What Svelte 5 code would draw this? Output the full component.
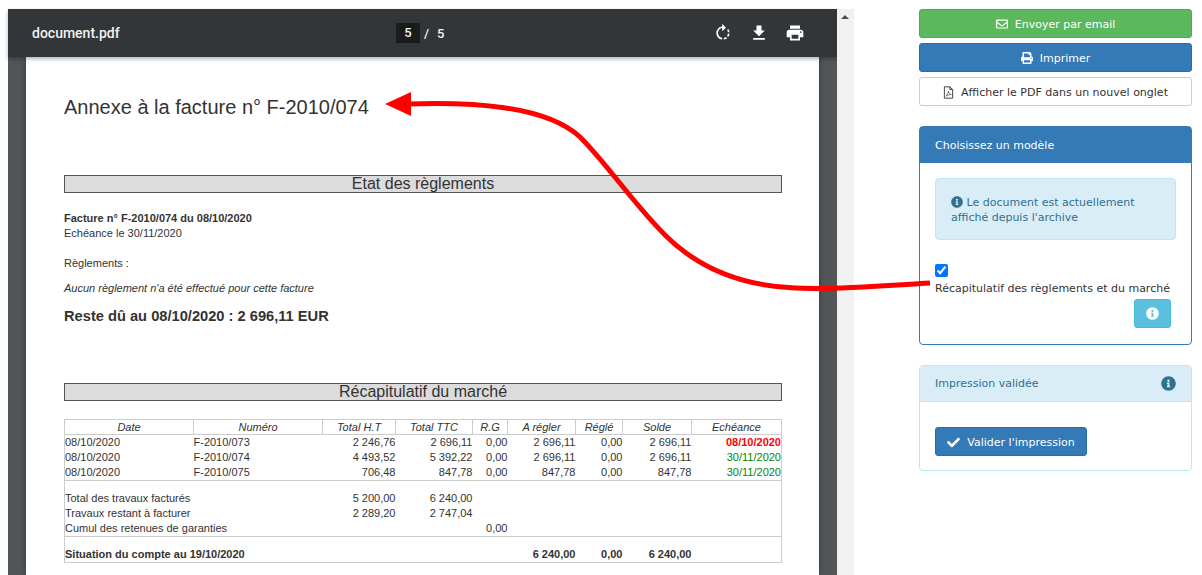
<script>
  const icons = {
    check: 'M173.898 439.404l-166.4-166.4c-9.997-9.997-9.997-26.206 0-36.204l36.203-36.204c9.997-9.998 26.207-9.998 36.204 0L192 312.69 432.095 72.596c9.997-9.997 26.207-9.997 36.204 0l36.203 36.204c9.997 9.997 9.997 26.206 0 36.204l-294.4 294.401c-9.998 9.997-26.207 9.997-36.204-.001z',
    info: 'M256 8C119.043 8 8 119.083 8 256c0 136.997 111.043 248 248 248s248-111.003 248-248C504 119.083 392.957 8 256 8zm0 110c23.196 0 42 18.804 42 42s-18.804 42-42 42-42-18.804-42-42 18.804-42 42-42zm56 254c0 6.627-5.373 12-12 12h-88c-6.627 0-12-5.373-12-12v-24c0-6.627 5.373-12 12-12h12v-64h-12c-6.627 0-12-5.373-12-12v-24c0-6.627 5.373-12 12-12h64c6.627 0 12 5.373 12 12v100h12c6.627 0 12 5.373 12 12v24z',
    print: 'M448 192V77.25c0-8.49-3.37-16.62-9.37-22.63L393.37 9.37c-6-6-14.14-9.37-22.63-9.37H96C78.33 0 64 14.33 64 32v160c-35.35 0-64 28.65-64 64v112c0 8.84 7.16 16 16 16h48v96c0 17.67 14.33 32 32 32h320c17.67 0 32-14.33 32-32v-96h48c8.84 0 16-7.16 16-16V256c0-35.35-28.65-64-64-64zm-64 256H128v-96h256v96zm0-224H128V64h192v48c0 8.84 7.16 16 16 16h48v96zm48 72c-13.25 0-24-10.75-24-24 0-13.26 10.75-24 24-24s24 10.74 24 24c0 13.25-10.75 24-24 24z',
    mail: 'M464 64H48C21.49 64 0 85.49 0 112v288c0 26.51 21.49 48 48 48h416c26.51 0 48-21.49 48-48V112c0-26.51-21.49-48-48-48zm0 48v40.805c-22.422 18.259-58.168 46.651-134.587 106.49-16.841 13.247-50.201 45.072-73.413 44.701-23.208.375-56.579-31.459-73.413-44.701C106.18 199.465 70.425 171.067 48 152.805V112h416zM48 400V214.398c22.914 18.251 55.409 43.862 104.938 82.646 21.857 17.205 60.134 55.186 103.062 54.955 42.717.231 80.509-37.199 103.053-54.947 49.528-38.783 82.032-64.401 104.947-82.653V400H48z'
  };

  const columns = [129, 129, 73, 77, 35, 68, 47, 69, 90];
  const heads = ['Date', 'Numéro', 'Total H.T', 'Total TTC', 'R.G', 'A régler', 'Réglé', 'Solde', 'Echéance'];
  const invoices = [
    ['08/10/2020', 'F-2010/073', '2 246,76', '2 696,11', '0,00', '2 696,11', '0,00', '2 696,11', '08/10/2020', 'late'],
    ['08/10/2020', 'F-2010/074', '4 493,52', '5 392,22', '0,00', '2 696,11', '0,00', '2 696,11', '30/11/2020', 'ok'],
    ['08/10/2020', 'F-2010/075', '706,48', '847,78', '0,00', '847,78', '0,00', '847,78', '30/11/2020', 'ok']
  ];
  const totals = [
    ['Total des travaux facturés', '5 200,00', '6 240,00', ''],
    ['Travaux restant à facturer', '2 289,20', '2 747,04', ''],
    ['Cumul des retenues de garanties', '', '', '0,00']
  ];
</script>

{#snippet fa(name, size)}
  <svg class="fa" viewBox="0 0 512 512" width={size} height={size} fill="currentColor"><path d={icons[name]} /></svg>
{/snippet}

<div class="screen">
  <section class="viewer">
    <header class="toolbar">
      <span class="title">document.pdf</span>
      <div class="pager"><span class="current">5</span><span class="sep">/</span><span>5</span></div>
      <div class="tools">
        <svg viewBox="0 0 24 24" width="20" height="20" fill="currentColor"><path d="M15.55 5.55L11 1v3.07C7.06 4.56 4 7.92 4 12s3.05 7.44 7 7.93v-2.02c-2.84-.48-5-2.94-5-5.91s2.16-5.43 5-5.91V10l4.55-4.45zM19.93 11c-.17-1.39-.72-2.73-1.62-3.89l-1.42 1.42c.54.75.88 1.6 1.02 2.47h2.02zM13 17.9v2.02c1.39-.17 2.74-.71 3.9-1.61l-1.44-1.44c-.75.54-1.59.89-2.46 1.03zm3.89-2.42l1.42 1.41c.9-1.16 1.45-2.5 1.62-3.89h-2.02c-.14.87-.48 1.72-1.02 2.48z" /></svg>
        <svg viewBox="0 0 24 24" width="20" height="20" fill="currentColor"><path d="M19 9h-4V3H9v6H5l7 7 7-7zM5 18v2h14v-2H5z" /></svg>
        <svg viewBox="0 0 24 24" width="20" height="20" fill="currentColor"><path d="M19 8H5c-1.66 0-3 1.34-3 3v6h4v4h12v-4h4v-6c0-1.66-1.34-3-3-3zm-3 11H8v-5h8v5zm3-7c-.55 0-1-.45-1-1s.45-1 1-1 1 .45 1 1-.45 1-1 1zm-1-9H6v4h12V3z" /></svg>
      </div>
    </header>
    <div class="stage">
      <article class="page">
        <h1>Annexe à la facture n° F-2010/074</h1>
        <h2 class="band first">Etat des règlements</h2>
        <p class="line bold">Facture n° F-2010/074 du 08/10/2020</p>
        <p class="line">Echéance le 30/11/2020</p>
        <p class="line gap-a">Règlements :</p>
        <p class="line gap-b"><em>Aucun règlement n'a été effectué pour cette facture</em></p>
        <p class="rest">Reste dû au 08/10/2020 : 2 696,11 EUR</p>
        <h2 class="band second">Récapitulatif du marché</h2>
        <table>
          <colgroup>
            {#each columns as w}<col style="width:{w}px" />{/each}
          </colgroup>
          <thead>
            <tr>{#each heads as h}<th>{h}</th>{/each}</tr>
          </thead>
          <tbody>
            {#each invoices as r}
              <tr>
                <td>{r[0]}</td><td>{r[1]}</td>
                {#each r.slice(2, 8) as v}<td class="num">{v}</td>{/each}
                <td class="num {r[9]}">{r[8]}</td>
              </tr>
            {/each}
            <tr class="rule"><td colspan="9"></td></tr>
            {#each totals as t}
              <tr>
                <td colspan="2">{t[0]}</td>
                <td class="num">{t[1]}</td><td class="num">{t[2]}</td><td class="num">{t[3]}</td>
                <td colspan="4"></td>
              </tr>
            {/each}
            <tr class="rule"><td colspan="9"></td></tr>
            <tr class="sum">
              <td colspan="2">Situation du compte au 19/10/2020</td>
              <td></td><td></td><td></td>
              <td class="num">6 240,00</td><td class="num">0,00</td><td class="num">6 240,00</td><td></td>
            </tr>
          </tbody>
        </table>
      </article>
    </div>
  </section>

  <div class="scrollbar"><span class="arrow-up"></span></div>

  <aside class="side">
    <button class="btn green">{@render fa('mail', 12)}Envoyer par email</button>
    <button class="btn blue">{@render fa('print', 12)}Imprimer</button>
    <button class="btn plain">
      <svg class="fa" viewBox="0 0 12 14" width="11" height="13" fill="none" stroke="#333" stroke-width="1"><path d="M1.5 .8h6l3 3v9.4h-9zM7.500 .8v3h3" /><path d="M3.2 11c1.5-1 2.6-3.6 2.6-5.5 1 2.4 1.8 3.6 3.2 3.8-2-.1-4 .5-5.800 1.700z" stroke-width=".7" /></svg>
      Afficher le PDF dans un nouvel onglet
    </button>

    <div class="panel primary">
      <div class="panel-head">Choisissez un modèle</div>
      <div class="panel-body">
        <div class="alert">{@render fa('info', 12)} Le document est actuellement affiché depuis l'archive</div>
        <label class="model">
          <input type="checkbox" checked />
          <span>Récapitulatif des règlements et du marché</span>
        </label>
        <div class="model-action">
          <button class="btn-info" aria-label="Informations">{@render fa('info', 13)}</button>
        </div>
      </div>
    </div>

    <div class="panel validated">
      <div class="panel-head">
        <span>Impression validée</span>
        {@render fa('info', 15)}
      </div>
      <div class="panel-body">
        <button class="btn blue validate">{@render fa('check', 13)}Valider l'impression</button>
      </div>
    </div>
  </aside>

  <!-- Annotation drawn over the screenshot -->
  <svg class="annotation" width="1202" height="575" viewBox="0 0 1202 575">
    <path d="M930 283 C880 286 835 290 795 288 C745 286 700 270 665 235 C632 202 608 165 580 137 C545 105 470 102 408 104" fill="none" stroke="#f00" stroke-width="5" />
    <polygon points="385,104 411,92 411,116" fill="#f00" />
  </svg>
</div>

<style>
  :global(body) {
    margin: 0;
    background: #fff;
    overflow: hidden;
  }

  .screen {
    position: relative;
    display: flex;
    align-items: flex-start;
    width: 1202px;
    height: 575px;
    overflow: hidden;
    font-family: "DejaVu Sans", Verdana, sans-serif;
    font-size: 11px;
    color: #333;
  }

  .viewer {
    width: 829px;
    height: 566px;
    margin: 9px 0 0 8px;
    flex: none;
    display: flex;
    flex-direction: column;
    background: #525659;
  }

  .toolbar {
    height: 48px;
    flex: none;
    display: grid;
    grid-template-columns: 364px auto 1fr;
    align-items: center;
    padding: 0 32px 0 24px;
    background: #323639;
    color: #f1f1f1;
    font-family: Roboto, sans-serif;
    box-shadow: 0 2px 4px rgba(0, 0, 0, .3);
    position: relative;
  }

  .title {
    font-size: 14px;
    font-weight: 500;
  }

  .pager {
    display: flex;
    align-items: center;
    font-size: 13px;
    font-weight: 500;
  }

  .current {
    width: 24px;
    height: 20px;
    line-height: 20px;
    text-align: center;
    background: #191b1c;
  }

  .sep {
    margin: 0 8px 0 4px;
  }

  .tools {
    display: flex;
    justify-content: flex-end;
    align-items: center;
    gap: 16px;
    color: #fff;
  }

  .stage {
    flex: 1;
    min-height: 0;
    padding: 0 18px;
    overflow: hidden;
  }

  .page {
    height: 100%;
    padding: 39px 37px 0 38px;
    box-sizing: border-box;
    background: #fff;
    box-shadow: 0 0 6px rgba(0, 0, 0, .35);
    font-family: "Liberation Sans", Arial, sans-serif;
    font-size: 11px;
    color: #333;
  }

  h1 {
    margin: 0;
    font-size: 20px;
    font-weight: 400;
    line-height: 23px;
  }

  .band {
    margin: 0;
    height: 16px;
    border: 1px solid #555;
    background: #dcdcdc;
    font-size: 16px;
    font-weight: 400;
    line-height: 16px;
    text-align: center;
  }

  .band.first {
    margin-top: 56px;
  }

  .band.second {
    margin-top: 59px;
  }

  .line {
    margin: 0;
    line-height: 15px;
  }

  .band.first + .line {
    margin-top: 18px;
  }

  .bold {
    font-weight: 700;
  }

  .gap-a {
    margin-top: 15px;
  }

  .gap-b {
    margin-top: 10px;
  }

  .rest {
    margin: 12px 0 0;
    font-size: 14.67px;
    font-weight: 700;
    line-height: 16px;
  }

  table {
    width: 718px;
    margin-top: 18px;
    table-layout: fixed;
    border-collapse: collapse;
    border: 1px solid #ccc;
    font-size: 11px;
  }

  th {
    height: 14px;
    padding: 0;
    font-weight: 400;
    font-style: italic;
    border-left: 1px solid #ccc;
    border-bottom: 1px solid #ccc;
    line-height: 14px;
  }

  td {
    height: 15px;
    padding: 0;
    line-height: 15px;
    white-space: nowrap;
  }

  .num {
    text-align: right;
  }

  .late {
    color: #f00;
    font-weight: 700;
  }

  .ok {
    color: #080;
  }

  .rule td {
    height: 10px;
    padding: 0;
    border-top: 1px solid #ccc;
  }

  .sum td {
    font-weight: 700;
  }

  .scrollbar {
    width: 17px;
    height: 566px;
    margin-top: 9px;
    flex: none;
    background: #f1f1f1;
    position: relative;
  }

  .arrow-up {
    position: absolute;
    top: 6px;
    left: 4px;
    border: 4px solid transparent;
    border-top: 0;
    border-bottom: 4px solid #505050;
  }

  .side {
    width: 273px;
    margin: 9px 0 0 65px;
    flex: none;
    display: flex;
    flex-direction: column;
  }

  .btn {
    display: flex;
    align-items: center;
    justify-content: center;
    gap: 7px;
    height: 29px;
    margin-bottom: 5px;
    padding: 1px 12px 0;
    box-sizing: border-box;
    border: 1px solid transparent;
    border-radius: 3px;
    font: 11px "DejaVu Sans", Verdana, sans-serif;
    color: #fff;
  }

  .green {
    background: #5cb85c;
    border-color: #4cae4c;
  }

  .blue {
    background: #337ab7;
    border-color: #2e6da4;
  }

  .plain {
    background: #fff;
    border-color: #ccc;
    color: #333;
  }

  .panel {
    border: 1px solid;
    border-radius: 4px;
    background: #fff;
  }

  .primary {
    margin-top: 15px;
    border-color: #337ab7;
  }

  .primary .panel-head {
    height: 36px;
    padding: 0 15px;
    display: flex;
    align-items: center;
    background: #337ab7;
    color: #fff;
  }

  .primary .panel-body {
    padding: 15px 15px 16px;
  }

  .alert {
    height: 62px;
    padding: 16px 15px 0;
    box-sizing: border-box;
    border: 1px solid #bce8f1;
    border-radius: 4px;
    background: #d9edf7;
    color: #31708f;
    line-height: 15px;
  }

  .alert .fa {
    vertical-align: -2px;
  }

  .model {
    display: block;
    margin-top: 24px;
    white-space: nowrap;
  }

  .model input {
    display: block;
    width: 13px;
    height: 13px;
    margin: 0 0 4px;
  }

  .model span {
    display: block;
    line-height: 15px;
  }

  .model-action {
    display: flex;
    justify-content: flex-end;
    margin: 3px 5px 0 0;
  }

  .btn-info {
    width: 37px;
    height: 29px;
    padding: 0;
    display: flex;
    align-items: center;
    justify-content: center;
    border: 1px solid #46b8da;
    border-radius: 3px;
    background: #5bc0de;
    color: #fff;
  }

  .validated {
    margin-top: 20px;
    border-color: #bce8f1;
  }

  .validated .panel-head {
    height: 35px;
    padding: 0 15px;
    display: flex;
    align-items: center;
    justify-content: space-between;
    background: #d9edf7;
    border-bottom: 1px solid #bce8f1;
    color: #31708f;
  }

  .validated .panel-body {
    padding: 25px 15px 14px;
  }

  .validate {
    margin: 0;
    width: 152px;
    padding: 1px 0 0;
  }

  .annotation {
    position: absolute;
    top: 0;
    left: 0;
    pointer-events: none;
  }
</style>
